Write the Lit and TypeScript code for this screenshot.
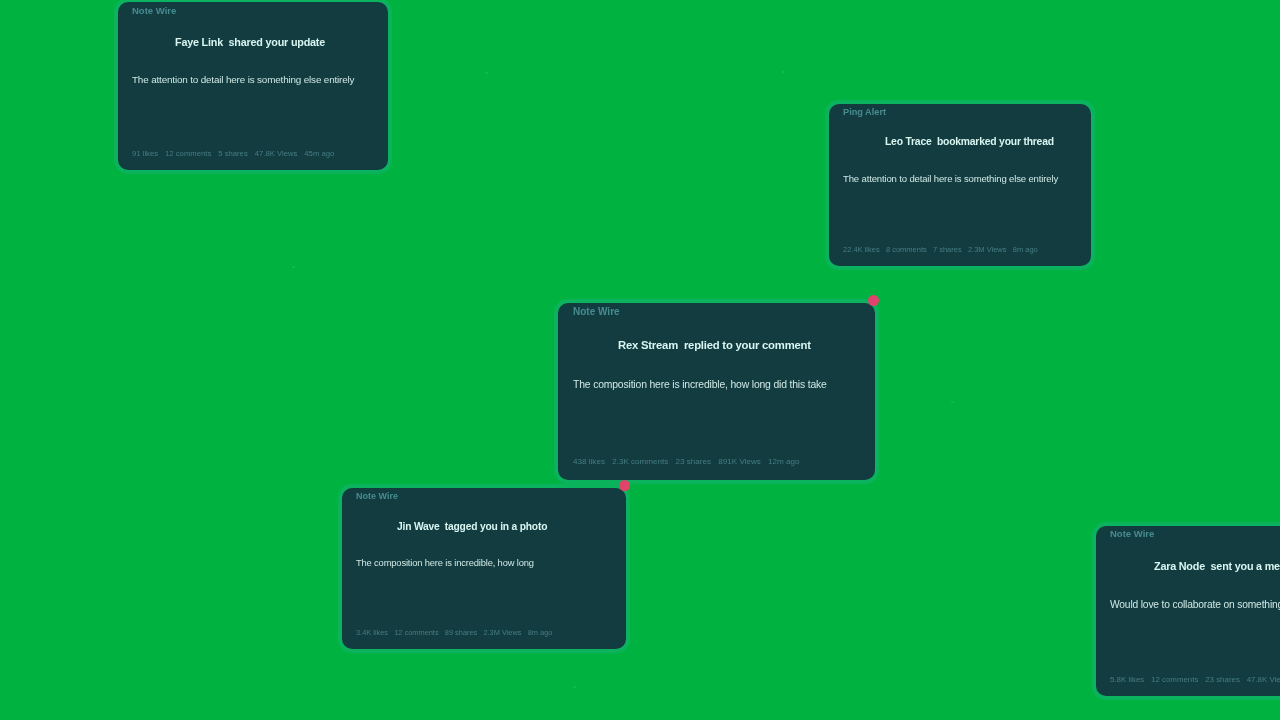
import { LitElement, html, css } from "lit";
import { customElement } from "lit/decorators.js";

interface Card {
  x: number; y: number; w: number; h: number;
  app: string; name: string; action: string; body: string;
  stats: string[]; titleX: number; fApp: number; fTitle: number; fBody: number; fStat: number; gap: number;
  appTop: number; titleTop: number; bodyTop: number; statTop: number; pad: number; dot?: boolean;
}

const cards: Card[] = [
  { x: 118, y: 2, w: 270, h: 168, app: "Note Wire", name: "Faye Link", action: "shared your update",
    body: "The attention to detail here is something else entirely",
    stats: ["91 likes", "12 comments", "5 shares", "47.8K Views", "45m ago"],
    titleX: 57, fApp: 9.5, fTitle: 10.8, fBody: 9.9, fStat: 7.7, gap: 7, pad: 14, appTop: 4, titleTop: 35.2, bodyTop: 72.8, statTop: 147.5 },
  { x: 829, y: 104, w: 262, h: 162, app: "Ping Alert", name: "Leo Trace", action: "bookmarked your thread",
    body: "The attention to detail here is something else entirely",
    stats: ["22.4K likes", "8 comments", "7 shares", "2.3M Views", "8m ago"],
    titleX: 56, fApp: 9.2, fTitle: 10.35, fBody: 9.55, fStat: 7.5, gap: 6.2, pad: 14, appTop: 4, titleTop: 33.4, bodyTop: 70.3, statTop: 142 },
  { x: 558, y: 303, w: 317, h: 177, app: "Note Wire", name: "Rex Stream", action: "replied to your comment",
    body: "The composition here is incredible, how long did this take",
    stats: ["438 likes", "2.3K comments", "23 shares", "891K Views", "12m ago"],
    titleX: 60, fApp: 10, fTitle: 11.3, fBody: 10.4, fStat: 8.1, gap: 7.2, pad: 15, appTop: 4, titleTop: 36.6, bodyTop: 77.4, statTop: 155, dot: true },
  { x: 342, y: 488, w: 284, h: 161, app: "Note Wire", name: "Jin Wave", action: "tagged you in a photo",
    body: "The composition here is incredible, how long",
    stats: ["3.4K likes", "12 comments", "89 shares", "2.3M Views", "8m ago"],
    titleX: 55, fApp: 9, fTitle: 10.25, fBody: 9.35, fStat: 7.4, gap: 6.2, pad: 14, appTop: 4, titleTop: 33.5, bodyTop: 70.6, statTop: 141, dot: true },
  { x: 1096, y: 526, w: 300, h: 170, app: "Note Wire", name: "Zara Node", action: "sent you a message",
    body: "Would love to collaborate on something soon",
    stats: ["5.8K likes", "12 comments", "23 shares", "47.8K Views", "2h ago"],
    titleX: 58, fApp: 9.5, fTitle: 10.8, fBody: 10.25, fStat: 7.9, gap: 6.8, pad: 14, appTop: 3, titleTop: 35.2, bodyTop: 74.4, statTop: 149.5 },
];

const specks: [number, number][] = [[486, 73], [783, 72], [293, 267], [952, 402], [574, 687]];

@customElement("app-root")
export class AppRoot extends LitElement {
  static styles = css`
    :host {
      display: block;
      position: relative;
      width: 1280px;
      height: 720px;
      overflow: hidden;
      background: #00b340;
      font-family: "Liberation Sans", Arial, sans-serif;
    }
    .card {
      position: absolute;
      box-sizing: border-box;
      background: #133c41;
      border-radius: 10px;
      box-shadow: 0 0 1px 4px #0cb35e;
      filter: blur(0.45px);
    }
    .app { position: absolute; font-weight: 700; color: #478c90; line-height: 1; white-space: nowrap; }
    .title { position: absolute; font-weight: 700; color: #d8f5f0; line-height: 1; white-space: pre; letter-spacing: -0.019em; }
    .body { position: absolute; color: #cfe8e4; line-height: 1; white-space: nowrap; letter-spacing: -0.016em; }
    .stats { position: absolute; display: flex; color: #457d82; line-height: 1; white-space: nowrap; }
    .dot {
      position: absolute;
      top: -8px;
      right: -4px;
      width: 11px;
      height: 11px;
      border-radius: 50%;
      background: #e0446c;
    }
    .speck {
      position: absolute;
      width: 3px;
      height: 2px;
      border-radius: 50%;
      background: #14bb5c;
    }
  `;

  render() {
    return html`
      ${specks.map(([x, y]) => html`<div class="speck" style="left:${x - 1}px;top:${y - 1}px"></div>`)}
      ${cards.map((c) => html`
        <div class="card" style="left:${c.x}px;top:${c.y}px;width:${c.w}px;height:${c.h}px">
          <div class="app" style="left:${c.pad}px;top:${c.appTop}px;font-size:${c.fApp}px">${c.app}</div>
          <div class="title" style="left:${c.titleX}px;top:${c.titleTop}px;font-size:${c.fTitle}px">${c.name}  ${c.action}</div>
          <div class="body" style="left:${c.pad}px;top:${c.bodyTop}px;font-size:${c.fBody}px">${c.body}</div>
          <div class="stats" style="left:${c.pad}px;top:${c.statTop}px;font-size:${c.fStat}px;gap:${c.gap}px">
            ${c.stats.map((s) => html`<span>${s}</span>`)}
          </div>
          ${c.dot ? html`<div class="dot"></div>` : ""}
        </div>
      `)}
    `;
  }
}
